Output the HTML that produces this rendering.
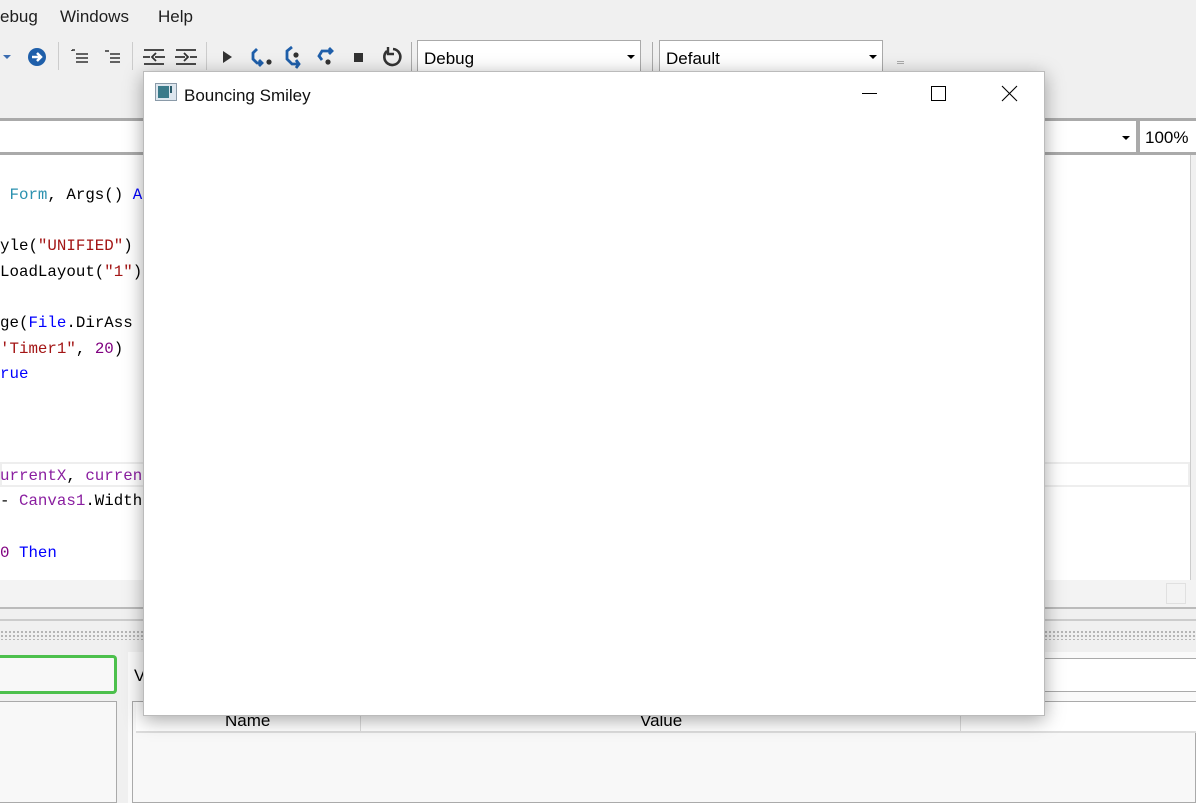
<!DOCTYPE html>
<html><head><style>
*{margin:0;padding:0;box-sizing:border-box}
body{width:1196px;height:803px;overflow:hidden;background:#f0f0f0;position:relative;font-family:"Liberation Sans",sans-serif}
.a{position:absolute}
.m{font-size:17px;color:#1e1e1e;top:7px}
.code{font-family:"Liberation Mono",monospace;font-size:15.8px;white-space:pre;left:0;color:#000}
.b{color:#0000ff}.s{color:#a31515}.p{color:#8a1ea0}.t{color:#2b91af}.n{color:#800080}
.dots{background-image:radial-gradient(#aaa 0.8px,transparent 1.2px);background-size:4px 4px}
</style></head><body>
<div class="a m" style="left:0">ebug</div>
<div class="a m" style="left:60px">Windows</div>
<div class="a m" style="left:158px">Help</div>
<!-- toolbar -->
<div class="a" style="left:3px;top:55px;width:0;height:0;border-left:4px solid transparent;border-right:4px solid transparent;border-top:4px solid #3a6cb0"></div>
<svg class="a" style="left:27px;top:47px" width="21" height="21"><circle cx="10" cy="10" r="9" fill="#1f5faa"/><path d="M5 10h8M10 6l4 4-4 4" stroke="#fff" stroke-width="2.5" fill="none"/></svg>
<div class="a" style="left:58px;top:42px;width:1px;height:28px;background:#ccc"></div>
<svg class="a" style="left:70px;top:48px" width="20" height="18"><path d="M2 2h3M6 6h12M6 10h12M6 14h12M2 2v1" stroke="#333" stroke-width="1.6"/></svg>
<svg class="a" style="left:102px;top:48px" width="20" height="18"><path d="M3 3h4M8 6h10M8 10h10M8 14h10" stroke="#333" stroke-width="1.6"/></svg>
<div class="a" style="left:132px;top:42px;width:1px;height:28px;background:#ccc"></div>
<svg class="a" style="left:142px;top:46px" width="24" height="22"><path d="M1 11h7M13 11h10M2 4h20M2 18h20M14 7l-4 4 4 4" stroke="#333" stroke-width="1.8" fill="none"/></svg>
<svg class="a" style="left:174px;top:46px" width="24" height="22"><path d="M1 11h10M16 11h7M2 4h20M2 18h20M10 7l4 4-4 4" stroke="#333" stroke-width="1.8" fill="none"/></svg>
<div class="a" style="left:206px;top:42px;width:1px;height:28px;background:#ccc"></div>
<div class="a" style="left:223px;top:51px;border-left:9px solid #333;border-top:6px solid transparent;border-bottom:6px solid transparent"></div>
<svg class="a" style="left:248px;top:45px" width="26" height="24"><path d="M9 4 5 8v6l4 4h5M11 15l3 3-3 3" stroke="#1f5faa" stroke-width="2.8" fill="none"/><circle cx="21" cy="17" r="2.6" fill="#333"/></svg>
<svg class="a" style="left:283px;top:44px" width="24" height="26"><path d="M9 3 4 7v8l5 5h6M13 16l3 4-3 4" stroke="#1f5faa" stroke-width="2.8" fill="none"/><circle cx="13" cy="11" r="2.6" fill="#333"/></svg>
<svg class="a" style="left:315px;top:44px" width="24" height="26"><path d="M7 16 4 12l3-5h10M14 4l3 3-3 3" stroke="#1f5faa" stroke-width="2.8" fill="none"/><circle cx="13" cy="18" r="2.6" fill="#333"/></svg>
<div class="a" style="left:354px;top:53px;width:9px;height:9px;background:#333"></div>
<svg class="a" style="left:380px;top:45px" width="24" height="24"><path d="M7 6a8 8 0 1 0 6-2" stroke="#333" stroke-width="2.6" fill="none"/><path d="M8 2v7h6" stroke="#333" stroke-width="2.4" fill="none"/></svg>
<div class="a" style="left:411px;top:42px;width:1px;height:30px;background:#aaa"></div>
<div class="a" style="left:417px;top:40px;width:224px;height:33px;background:#fff;border:1px solid #aaa;font-size:17px;padding:8px 0 0 6px">Debug</div>
<div class="a" style="left:627px;top:55px;border-left:4px solid transparent;border-right:4px solid transparent;border-top:4px solid #000"></div>
<div class="a" style="left:652px;top:42px;width:1px;height:30px;background:#aaa"></div>
<div class="a" style="left:659px;top:40px;width:224px;height:33px;background:#fff;border:1px solid #aaa;font-size:17px;padding:8px 0 0 6px">Default</div>
<div class="a" style="left:869px;top:55px;border-left:4px solid transparent;border-right:4px solid transparent;border-top:4px solid #000"></div>
<div class="a" style="left:897px;top:61px;width:7px;height:1px;background:#aaa;box-shadow:0 2px #aaa"></div>
<!-- combo row -->
<div class="a" style="left:0;top:118px;width:1196px;height:37px;background:#aaa"></div>
<div class="a" style="left:0;top:121px;width:1136px;height:31px;background:#fff"></div>
<div class="a" style="left:1122px;top:136px;border-left:4px solid transparent;border-right:4px solid transparent;border-top:4px solid #000"></div>
<div class="a" style="left:1140px;top:121px;width:56px;height:31px;background:#fff;font-size:17px;padding:7px 0 0 5px">100%</div>
<!-- editor -->
<div class="a" style="left:0;top:155px;width:1190px;height:425px;background:#fff"></div>
<div class="a" style="left:1190px;top:155px;width:6px;height:425px;background:#f0f0f0;border-left:1px solid #ccc"></div>
<div class="a" style="left:0;top:462px;width:1190px;height:25px;border:2px solid #eee;background:#fff"></div>
<div class="a code" style="top:186px"><span class="t"> Form</span>, Args() <span class="b">A</span></div>
<div class="a code" style="top:237px">yle(<span class="s">"UNIFIED"</span>)</div>
<div class="a code" style="top:263px">LoadLayout(<span class="s">"1"</span>)</div>
<div class="a code" style="top:314px">ge(<span class="b">File</span>.DirAss</div>
<div class="a code" style="top:340px"><span class="s">'Timer1"</span>, <span class="n">20</span>)</div>
<div class="a code" style="top:365px"><span class="b">rue</span></div>
<div class="a code" style="top:467px"><span class="p">urrentX</span>, <span class="p">curren</span></div>
<div class="a code" style="top:492px">- <span class="p">Canvas1</span>.Width</div>
<div class="a code" style="top:544px"><span class="n">0</span> <span class="b">Then</span></div>
<div class="a" style="left:0;top:580px;width:1196px;height:28px;background:#f3f3f3"></div>
<div class="a" style="left:1166px;top:583px;width:20px;height:21px;border:1px solid #e0e0e0"></div>
<div class="a" style="left:0;top:607px;width:1196px;height:2px;background:#bbb"></div>
<div class="a" style="left:0;top:619px;width:1196px;height:2px;background:#ccc"></div>
<div class="a dots" style="left:0;top:630px;width:1196px;height:10px"></div>
<div class="a" style="left:0;top:652px;width:1196px;height:151px;background:#f0f0f0"></div>
<div class="a" style="left:0;top:655px;width:117px;height:39px;border:3px solid #4cc04c;border-left:none;border-radius:0 4px 4px 0;background:#f8f8f8"></div>
<div class="a" style="left:0;top:701px;width:117px;height:102px;border:1px solid #aaa;border-left:none;background:#f8f8f8"></div>
<div class="a" style="left:128px;top:652px;width:1068px;height:151px;background:#fafafa"></div>
<div class="a" style="left:132px;top:701px;width:1064px;height:102px;border:1px solid #aaa;background:#f8f8f8"></div>
<div class="a" style="left:136px;top:702px;width:1060px;height:31px;border-bottom:2px solid #ddd;background:#fff"></div>
<div class="a" style="left:360px;top:702px;width:1px;height:31px;background:#ddd"></div>
<div class="a" style="left:960px;top:702px;width:1px;height:31px;background:#ddd"></div>
<div class="a" style="left:225px;top:711px;font-size:17px">Name</div>
<div class="a" style="left:640px;top:711px;font-size:17px">Value</div>
<div class="a" style="left:134px;top:666px;font-size:17px">V</div>
<div class="a" style="left:1040px;top:658px;width:156px;height:34px;border-top:1px solid #aaa;border-bottom:1px solid #aaa;background:#fff"></div>
<!-- window -->
<div class="a" style="left:143px;top:71px;width:902px;height:645px;background:#fff;box-shadow:0 4px 18px rgba(0,0,0,.35);border:1px solid #bbb"></div>
<svg class="a" style="left:155px;top:83px" width="23" height="20"><rect x="0.5" y="0.5" width="21" height="17" fill="#dde6ee" stroke="#8a9aa8"/><rect x="3" y="3" width="11" height="12" fill="#3a7a8a"/><rect x="15" y="3" width="2" height="7" fill="#2a5a6a"/></svg>
<div class="a" style="left:184px;top:86px;font-size:17px;color:#111">Bouncing Smiley</div>
<div class="a" style="left:862px;top:93px;width:15px;height:1px;background:#000"></div>
<div class="a" style="left:931px;top:86px;width:15px;height:15px;border:1px solid #000"></div>
<svg class="a" style="left:1001px;top:85px" width="17" height="17"><path d="M1 1 16 16M16 1 1 16" stroke="#000" stroke-width="1.1"/></svg>
</body></html>
